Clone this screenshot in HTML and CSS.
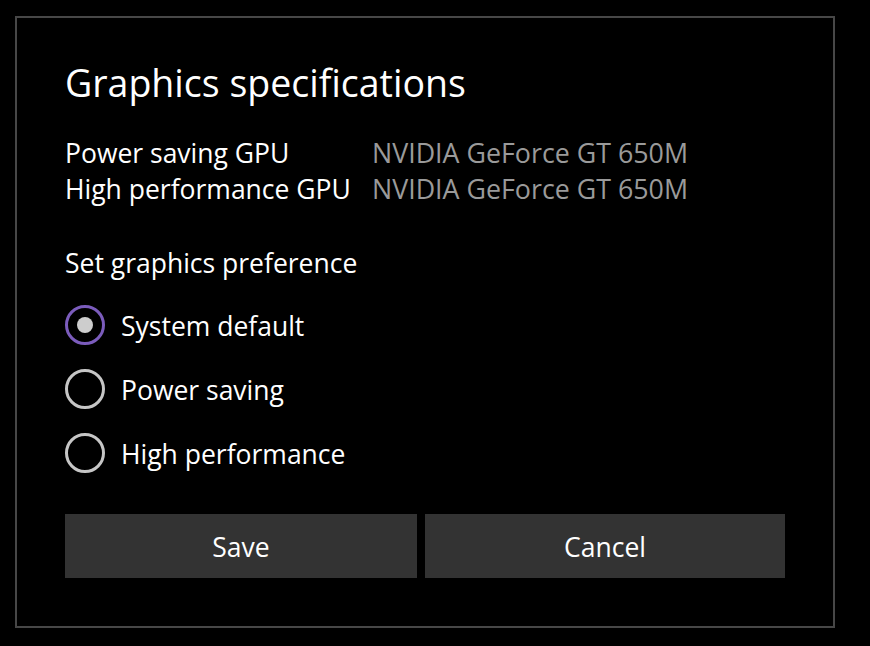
FILE: index.html
```html
<!DOCTYPE html>
<html lang="en">
<head>
<meta charset="utf-8">
<title>Graphics specifications</title>
<link rel="stylesheet" href="styles.css">
</head>
<body>
<div class="dialog">
  <h1 class="title">Graphics specifications</h1>
  <div class="specs">
    <span class="spec-label">Power saving GPU</span>
    <span class="spec-value">NVIDIA GeForce GT 650M</span>
    <span class="spec-label">High performance GPU</span>
    <span class="spec-value">NVIDIA GeForce GT 650M</span>
  </div>
  <p class="pref-label">Set graphics preference</p>
  <div class="radios">
    <div class="radio">
      <span class="radio-circle selected"><span class="radio-dot"></span></span>
      <span class="radio-text">System default</span>
    </div>
    <div class="radio">
      <span class="radio-circle"></span>
      <span class="radio-text">Power saving</span>
    </div>
    <div class="radio">
      <span class="radio-circle"></span>
      <span class="radio-text">High performance</span>
    </div>
  </div>
  <div class="actions">
    <button class="btn">Save</button>
    <button class="btn">Cancel</button>
  </div>
</div>
</body>
</html>
```

FILE: styles.css
```css
html, body {
  background: #000;
}
body {
  margin: 16px 0 0 15px;
  font-family: "Open Sans", "Noto Sans", sans-serif;
  color: #fff;
}
.dialog {
  width: 820px;
  box-sizing: border-box;
  border: 2px solid #474747;
  padding: 41px 48px 48px 48px;
}
.title {
  margin: 0;
  font-size: 37.5px;
  font-weight: 400;
  line-height: 48px;
}
.specs {
  margin-top: 28px;
  display: grid;
  grid-template-columns: 307px auto;
  font-size: 26.5px;
  line-height: 36px;
}
.spec-value {
  color: #9a9a9a;
  font-size: 26.8px;
}
.pref-label {
  margin: 38px 0 0 0;
  font-size: 26.5px;
  line-height: 36px;
}
.radios {
  margin-top: 23.5px;
  display: flex;
  flex-direction: column;
  gap: 24px;
}
.radio {
  display: flex;
  align-items: center;
  gap: 16px;
  height: 40px;
  font-size: 26.5px;
}
.radio-circle {
  width: 40px;
  height: 40px;
  box-sizing: border-box;
  border: 3px solid #c6c6c6;
  border-radius: 50%;
  display: flex;
  align-items: center;
  justify-content: center;
}
.radio-circle.selected {
  border-color: #7b5cbc;
}
.radio-dot {
  width: 16px;
  height: 16px;
  border-radius: 50%;
  background: #cdcdcd;
}
.radio-text {
  padding-top: 2px;
}
.actions {
  margin-top: 41.5px;
  display: grid;
  grid-template-columns: 352px 360px;
  gap: 8px;
}
.btn {
  height: 64px;
  border: none;
  background: #333333;
  color: #fff;
  font-family: inherit;
  font-size: 26.5px;
  padding: 2px 0 0 0;
}
```
